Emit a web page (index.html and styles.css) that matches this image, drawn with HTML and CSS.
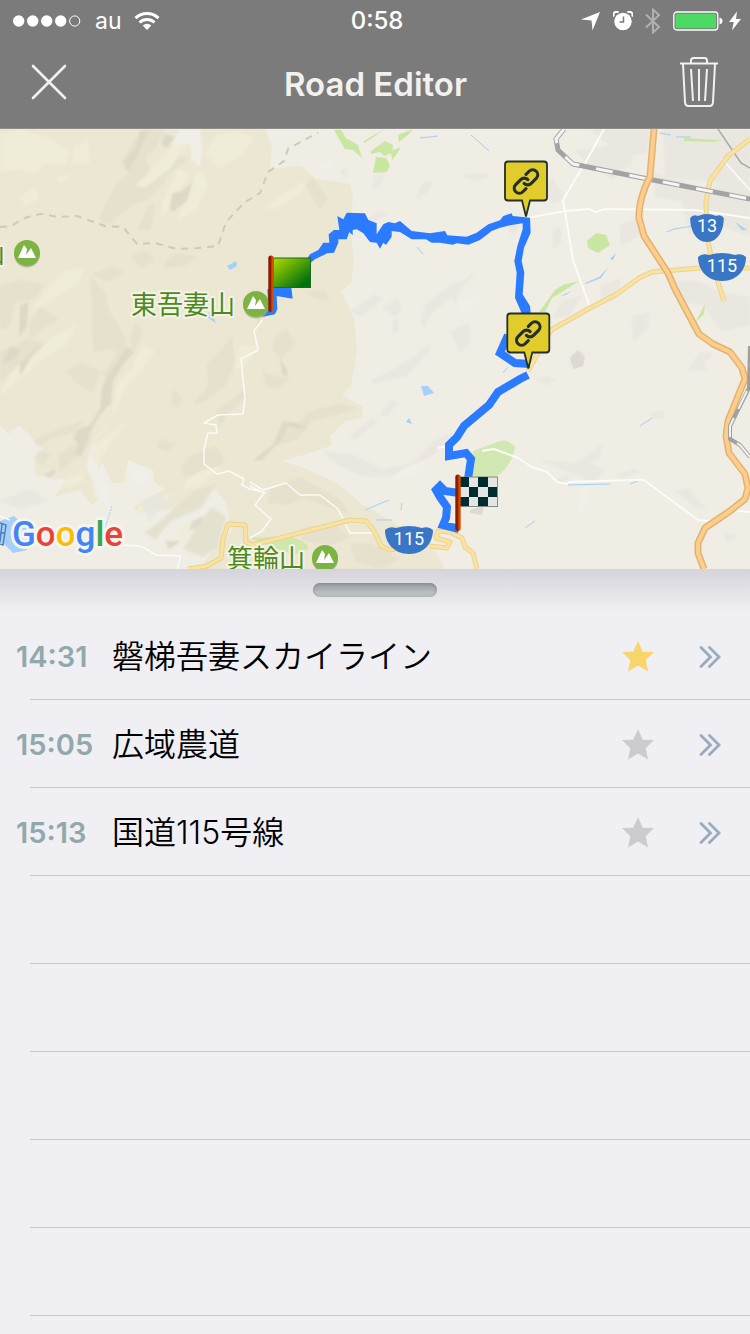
FILE: index.html
```html
<!DOCTYPE html>
<html lang="ja">
<head>
<meta charset="utf-8">
<meta name="viewport" content="width=device-width, initial-scale=1">
<title>Road Editor</title>
<link rel="stylesheet" href="styles.css">
</head>
<body>
<header class="header">
  <div class="status">
    <div class="status-left">
      <svg width="68" height="12" viewBox="0 0 68 12" aria-hidden="true"><g fill="#fff"><circle cx="5.700" cy="6" r="5.700"/><circle cx="19.700" cy="6" r="5.700"/><circle cx="33.700" cy="6" r="5.700"/><circle cx="47.700" cy="6" r="5.700"/></g><circle cx="61.700" cy="6" r="5.100" fill="none" stroke="#fff"/></svg>
      <span class="carrier">au</span>
      <svg width="26" height="20" viewBox="0 0 26 20" aria-hidden="true"><g fill="none" stroke="#fff" stroke-width="3"><path d="M1.500 7.200a16.500 16.500 0 0 1 23 0"/><path d="M5.500 11.500a10.800 10.800 0 0 1 15 0"/></g><path d="M8.700 14.600a6.200 6.200 0 0 1 8.600 0L13 19z" fill="#fff"/></svg>
    </div>
    <time class="clock">0:58</time>
    <div class="status-right">
      <svg width="20" height="20" viewBox="0 0 20 20" aria-hidden="true"><path d="M19 1 11.500 19.500 10.500 9.500 0 8.500z" fill="#fff"/></svg>
      <svg width="20" height="20" viewBox="0 0 20 20" aria-hidden="true"><circle cx="10" cy="10.500" r="8.700" fill="#fff"/><path d="M1 5.500A3 3 0 0 1 5.500 1.600M19 5.500A3 3 0 0 0 14.500 1.600" fill="none" stroke="#fff" stroke-width="2"/><path d="M10.500 5.500v5.500H6.500" fill="none" stroke="#7b7b7b" stroke-width="1.500"/></svg>
      <svg width="16" height="28" viewBox="0 0 16 28" aria-hidden="true"><path d="M1 7.500 14 20 8 25.500V2.500L14 8 1 20.500" fill="none" stroke="#b0b0b0" stroke-width="2"/></svg>
      <svg class="battery" width="50" height="20" viewBox="0 0 50 20" aria-hidden="true"><rect x=".8" y="1" width="44" height="18" rx="3" fill="none" stroke="#fff" stroke-width="1.300"/><rect x="2.500" y="2.700" width="40.600" height="14.600" rx="1.500" fill="#4cd964"/><path d="M46.500 6.500q3 1 3 3.500t-3 3.500z" fill="#fff"/></svg>
      <svg width="12" height="20" viewBox="0 0 12 20" aria-hidden="true"><path d="M8 .5 0 11h4.700L3 19.500 12 8H7z" fill="#fff"/></svg>
    </div>
  </div>
  <div class="nav">
    <button class="icon-button" type="button" aria-label="Close"><svg width="36" height="36" viewBox="0 0 36 36"><path d="m2 2 32 32M34 2 2 34" stroke="#f3f1ee" stroke-width="2.600" stroke-linecap="round"/></svg></button>
    <h1 class="title">Road Editor</h1>
    <button class="icon-button" type="button" aria-label="Delete"><svg width="38" height="52" viewBox="0 0 38 52" fill="none" stroke="#f3f1ee" stroke-width="2"><path d="M0 7.500h38M11 7V4.500Q11 2 13.500 2h11Q27 2 27 4.500V7M3 8l2 38q.2 4 3.500 4h21q3.300 0 3.500-4l2-38M11 13l2 32M19 13v32M27 13l-2 32"/></svg></button>
  </div>
</header>

<main>
<section class="map" aria-label="Map">
<svg class="map-canvas" viewBox="0 128 750 440" preserveAspectRatio="xMidYMid slice">
  <defs>
    <filter id="soften"><feGaussianBlur stdDeviation="1.300"/></filter>
    <linearGradient id="green" x1="0" y1="0" x2="1" y2="1"><stop offset="0" stop-color="#b5dc00"/><stop offset=".85" stop-color="#00710d"/></linearGradient>
    <linearGradient id="pole"><stop offset=".4" stop-color="#8f1a00"/><stop offset=".7" stop-color="#d34f00"/></linearGradient>
    <path id="shield" d="M-24-10Q-20-14-13-12 0-16 13-12 20-14 24-10C24 2 16 14 0 14S-24 2-24-10Z"/>
    <g id="peak"><circle cy="1.500" r="13" fill="#aaa68e" opacity=".7"/><circle r="13" fill="#7cb342"/><path d="M-9 5-3-8 0-4-1 2 4-5 9 5z" fill="#fff"/></g>
    <g id="pin"><path d="M-18-56h36q3 0 3 3v33q0 3-3 3H4L0-1-4-17h-14q-3 0-3-3v-33q0-3 3-3z" fill="#e2cc2c" stroke="#22302b" stroke-width="1.800"/><g transform="translate(-15 -51) scale(1.250)" fill="none" stroke="#22302b" stroke-width="2.500" stroke-linecap="round"><path d="M10.500 13.500a4 4 0 0 0 5.700 0l4-4a4 4 0 0 0-5.700-5.700l-2.500 2.500"/><path d="M13.500 10.500a4 4 0 0 0-5.700 0l-4 4a4 4 0 0 0 5.700 5.700l2.500-2.500"/></g></g>
  </defs>
  <rect y="128" width="750" height="440" fill="#efede4"/>
  <path fill="#ece7d3" d="M0 128H266L272 147 270 168 301 165 316 178 350 183 353 196 350 225 354 260 351 282 341 290 354 318 357 350 351 385 342 394 363 406 361 417 345 420 330 435 332 444 313 451 282 460 307 468 338 483 362 503 390 520 430 540 445 568H200L215 545 232 530 225 500 215 488 198 495 170 508 138 512 134 506 165 488 154 481 153 469 128 459 124 482 112 482 102 460 98 472 104 494 92 504 80 489 54 496 67 479 36 474 34 462 43 448 31 435 19 424 8 433 0 424Z"/>
  <g filter="url(#soften)" opacity=".85">
  <g fill="#e4e0cc">
    <path d="m140 130 25-2-8 18-12 10 6 15 25-20 12 8-30 22-18 10-15 20-20 12-5-8 18-12-4-18 15-12-8-12z"/>
    <path d="m100 213 15-28 20-12 25-5 6 12-20 20-20 5-15 18-10-2zM137 230l8-20 10-10-4 28zM165 260l12-8 22 4-14 9-20 2zM130 255l16-6 10 10-14 8zM92 273l20-7 14 5-20 10zM90 275l15 16 4 18 18 30-2 20-12-10-20 2-1-45zM0 285l20-6 25 4-10 15-20 3-5 25-10 3zM30 320l10-14 20 12-12 6-18 14zM0 350l15-4 10-8 20 4-8 14-20 8-17 18z"/>
    <path d="m80 362 20 8-6 22-18-10-10-12zM122 345l13 0-15 26-14 15-3-14zM173 388l10 8-6 12-6-7zM206 363l14-13 12-15 3 28-8 20-20 17-15 3 16-18zM215 410l12-8 16-13 5 6-20 17-8 14zM160 438l17 5-10 8-10-4zM60 427l25-8-12 13-22 6-13 8-5-7zM74 444l19-12-4 12-16 16-14 11 0-18zM40 450l12 2-10 13-8-8zM135 320l8 10-8 20-6-12zM258 300l8-4 0 20-10 10zM275 335l12-7 8 15-14 15-9-8zM262 370l10 4 18 4-12 10-12-2zM310 410l28-7 20 4-18 6-30 8-12 17-26 8zM180 467l10-12 26-10 10 14-20 18-22-2zM195 490l22-8-16 25-30 13-15 18-12-6 20-15 17-17zM305 290l20 0 5 10-18-4zM303 181l10-4 15 20-8 12zM200 520l12-14 14 10-8 30-15 10-20-8zM270 488l30-12 40 22 10 15-15-4-30-12-18 7-20-2zM300 527l35-3 16 12-20 8-28-4zM350 542l20 0 30 16-20 10-25-8z"/>
  </g>
  <g fill="#f0edd8">
    <path d="m0 133 20-5 30 10 20 12-5 14-20-2-10 10-15-4-20 3zM74 146l14-6 2 22-18 0zM155 165l20-22 15-5-20 30-25 19-10-2zM163 200l15-32 12 4-20 35-10 8zM195 175l8-4 5 13-10 22-22 16zM215 135l20-5 20 6-15 20-20 10-15-12zM20 195l15-8 4 10-14 8zM58 177l8-4 2 5-8 4zM45 290l20-20 18-3-4 14-28 18-20 12zM55 335l22-12-10 20-38 25-5-5zM155 350l-12 18-16 15-8 18-7 16 5-35 15-15 10-22zM40 352l-8 16-24 20-8 6 12-23zM100 440l26-20-15 20-12 20-2 25-8-30zM185 480l15-10 24-6-24 20-16 4zM265 205l25-16 18-10-8 15-28 15zM138 506l14-8 20-5-10 12-26 8zM165 546l16-20 20-10-15 24-24 9zM240 345l20 0-15 20-12 5zM65 478l20-6-3 8-18 8z"/>
  </g>
  <g fill="#dcd6c6">
    <path d="m140 131 10-3-8 15-6 14-8 13-4-10 12-12zM165 133l10 3-8 11-6-4zM171 200l22-20-6 20-12 8-5-2zM127 347l8 4-14 13-8 16-2 22-11 12-8 14-8 18-2 10-7-3 4-10-6-5 4-9 13-5 10-17 2-22 8-13zM10 345l10 4-4 8-14 6zM20 305l8-5-1 25-8 12zM280 358l6 8 2 10-6-3zM283 420l14 2 12 6-20-2-8 13-20 21-8-1 20-15zM38 345l-18 18 0 13 12-22zM172 193l8-3-4 20-6 0zM193 520l10-5-4 10-10 5zM165 540l16 0-12 8zM45 473l10-5 2 7-8 2z"/>
  </g>
  <g fill="#e8e6df">
    <path d="m340 170 9-3-4 10zM375 175l10-4-4 14-9 6zM415 198l8-16 9-3-4 12zM358 225l20-15 10 3-22 12zM460 175l20-3 14 3-18 4zM382 306l16-8 4 12-8 6zM350 310l25-17 8 5-22 18zM420 320l6-18 28-20 14-2-20 18-16 14-8 15zM448 290l28-20-16 20-5 12zM392 320l6-3 0 13-6 4zM372 379l20-10 20-12 15-12 4 4-24 26-35 8zM323 450l30 4 30 14 30-6 20-22 20-8-22 24-40 20-30-1-30-15zM390 400l8 0-10 16-8-3zM350 435l22-18 6 4-24 18zM450 330l20-8 0 20-10 10zM505 220l18-6-10 22zM553 228l8-2 0 17-8 5zM620 225l20-10 0 20-20 10zM680 195l70-20 0 60-30-10-30 8zM600 285l22-8-5 20-15 5zM540 190l12-14 12 20-10 6zM575 150l40-6 20 14-22 20-20-10zM590 128l60 0-3 24-24 5zM663 128l87 0 0 60-45-8-40-4zM655 172l40 12-4 18-36-6zM670 280l30 0 20 12 30 4 0 28-28 6-20-26-22-2zM632 315l18-4-3 18-14 12zM562 300l20-6-12 20-18 4z"/>
    <path d="m538 458 38 5 26-20-2 14-10 4 16 9-14 12-14-8-10-3zM613 475l22-7 7 3-20 5zM687 370l14-20 12 2-10 12 6 5zM650 412l14-3 0 9-12 0zM675 490l14-3 18 22-14-4zM723 532l15 3-10 8zM558 477l12-3-3 6-10 2zM569 356l10-8 6 4-4 14-10 1zM536 380l10-6 10 5-8 4zM0 500l30-12 20 12-30 8zM50 476l10-7-3 12zM140 500l20-8 7 10-18 18z"/>
  </g>
  <g fill="#f1f0eb"><path d="m180 128 20 0 2 20-2 18-8-7-2-16-18 0zM112 418l-15 18-5 20 12 18 5 30-12-6-5-20-6-13 6-20zM128 459l8 10 16 5-12 12zM580 490l8-5-2 20-9 10zM318 165l20-8-10 10zM390 480l12-12 32-12-20 18zM455 305l30-12-20 20z"/></g>
  </g>
  <g fill="#c9e7a2">
    <path d="m334 129 7 0 5 8 12 7 4 13-9-8-8-1zM364 140l20-12-10 8-10 6zM371 150l14-10 8 4-1 8-8 3-4-4-9 2zM376 156l10 1 4 7-3 7-14 1zM391 150l10-4-5 8-4 5zM398 134l15-6-5 6-9 7zM684 137l38 2-9 2-29-1zM587 240l9-8 10 2 4 10-12 8-10-5zM539 311l6-8 10-14 8-5 16-4-14 9-13 8-7 14zM697 318l8-15-1 10-8 8z"/>
    <path d="M473 450 500 440q9-2 15 6-3 17-15 27l-16 10-14-8z" fill="#d2e8b3"/><path d="m250 537 35-2q23 4 23 13l-14 6-22-8z" opacity=".8"/>
  </g>
  <path fill="#ded9d3" d="m570 357 8-8 7 8-2 8-9 3zM470 509l14-4-2 9-12-2z"/>
  <g fill="#a5d0fb"><path d="m227 265 9-5 1 5-7 4zM207 312l4-1 5 11-9-6zM421 385l7 0 6 7-10 3zM406 421l3-4 3 6zM585 282l14-6 9-9-7 10-15 6zM560 295l12-5-6 4-6 1zM610 258l6-6-3 7zM735 221l12 8-5 0zM0 520l14-5 18 18-5 16-14 3-10-10-3 0z"/></g>
  <g fill="none" stroke="#a5cdf7" stroke-width="1"><path d="m420 137 18-2M471 134l18 16M417 246l6 7M659 132l12 2M667 231l7-3 18-3M640 425l12-8M568 484l42-1M630 483l10-4M525 527l10-7M365 509l24-10M376 519l16 0M401 509l1-7M503 372l5-6M676 136l15 0"/><path d="m104 530 8-25" stroke-dasharray="2 1"/></g>
  <path d="M0 522 6 524 3 544 0 543M2 523 0 541M0 532h5" fill="none" stroke="#527fba" stroke-width="1.500"/>
  <path d="M0 226 12 225Q25 214 44 213L57 216 77 215 105 225 123 226 137 243 155 242 177 248 198 247 218 245 226 221 245 201 260 192 268 171 284 160 288 148 304 139 318 132" fill="none" stroke="#cecab9" stroke-width="2" stroke-dasharray="7 6"/>
  <g fill="none" stroke="#fbfbf7" stroke-width="1.800" stroke-linejoin="round">
    <path d="m263 318-9 12 4 19-17 9 4 39-2 16-25 1-14 8 12 2 1 8-9 0-4 16 0 15 13 10 12-3 15 8-2 6 8 4 16 4M250 481l13 8 23-7 14 12 20 0 18 14 12 24 28 0M250 485l14 7-9 12 16 14-9 12-12 7M0 515l10 4M121 544l20 1 15 9 25 1-4 13" stroke-width="1.500"/>
    <path d="m604 128-12 22-29 49 10 60 17 47M526 217l40-7 23-2 7 3 9-3 90 1 55 8M438 447l10-2M482 450l12-2 24 9 14 9 15 5 10 10 10 2 2-2 60-2 15 0 54 40 12 1M737 510l13 1" stroke-width="2"/>
    <path d="m722 158 28 31"/>
  </g>
  <path d="m718 128 23 34 9 5" fill="none" stroke="#aaa" stroke-width="1.500"/>
  <g fill="none" stroke-linejoin="round">
    <path d="m528 370 23-41 39-22 27-14 22-16 13-6 48-4 50 0M750 138l-22 17-18 25-4 20 1 35 6 30 11 35M188 568l19-3 14-8 2-19 5-15 17 1 1 17 6 3 98-25 16 1 8 10 7 15 9 4 40-8M430 545l17 2 3-6-14-4 2-7 12 1 12 6 3 9 8 6 4 16" stroke="#ead291" stroke-width="5"/>
    <path d="m528 370 23-41 39-22 27-14 22-16 13-6 48-4 50 0M750 138l-22 17-18 25-4 20 1 35 6 30 11 35M188 568l19-3 14-8 2-19 5-15 17 1 1 17 6 3 98-25 16 1 8 10 7 15 9 4 40-8M430 545l17 2 3-6-14-4 2-7 12 1 12 6 3 9 8 6 4 16" stroke="#fae3a1" stroke-width="3"/>
    <path d="m564 128-8 10 2 11 15 14 75 15 102 20" stroke="#a3a3a3" stroke-width="5"/><path d="m564 128-8 10 2 11 15 14 75 15 102 20" stroke="#f5f5f5" stroke-width="3" stroke-dasharray="17 17"/>
    <path d="M654 128 650 175Q638 200 639 217L644 235 668 272 675 288 699 333 713 343 730 351 742 367 745 378 738 395 728 420 726 435 729 452 745 473 748 487 745 498 730 510 705 527 698 542 698 552 704 568" stroke="#e4b16f" stroke-width="7"/><path d="M654 128 650 175Q638 200 639 217L644 235 668 272 675 288 699 333 713 343 730 351 742 367 745 378 738 395 728 420 726 435 729 452 745 473 748 487 745 498 730 510 705 527 698 542 698 552 704 568" stroke="#fcce8d" stroke-width="4"/>
    <path d="m750 345-1 42-19 38 0 13 10 6 10 12" stroke="#a0a0a0" stroke-width="4"/><path d="m747 390-17 35 0 13 10 6 10 12" stroke="#f2f2f2" stroke-width="2" stroke-dasharray="20 10"/>
  </g>
  <g fill="#2a7bff">
    <path transform="translate(250 125) scale(.33333)" d="M170 400 180 385 205 372 220 350 238 350 236 325 252 312 268 312 262 270 280 280 290 260 345 262 355 282 380 292 380 325 400 295 415 288 435 292 450 285 485 315 540 322 585 315 592 328 650 332 680 320 715 295 750 283 760 270 785 262 788 270 840 275 842 320 822 365 815 405 823 440 818 505 840 540 842 562 815 562 795 515 800 440 793 405 802 360 818 310 818 292 780 298 750 305 725 315 690 342 655 356 620 352 608 356 570 350 545 350 528 340 485 340 450 318 425 315 425 332 408 357 400 350 390 368 380 350 360 348 340 322 320 310 308 312 308 328 298 318 290 340 265 340 265 350 252 380 232 382 215 390 195 400 180 412ZM75 484 124 484 128 518 80 510 82 550 75 565 35 573 55 550 52 490Z"/>
  </g>
  <path d="M508 334 500 352 515 362 530 363M528 374 520 378 498 391 489 404 464 425 457 436 449 444 449 455 466 452 471 458 468 478M459 492 445 490 440 485 436 489 440 496 447 506 446 517 443 524 459 528" fill="none" stroke="#2a7bff" stroke-width="8"/>
  <use href="#peak" x="27" y="252"/><use href="#peak" x="256" y="303"/><use href="#peak" x="325" y="557"/>
  <g class="place"><text x="-21" y="262">山</text><text x="131" y="313">東吾妻山</text><text x="227" y="567">箕輪山</text></g>
  <g fill="#3976c5"><use href="#shield" transform="translate(707 227) scale(.7 1)"/><use href="#shield" x="722" y="266"/><use href="#shield" x="409" y="539"/></g>
  <g class="route"><text x="707" y="231">13</text><text x="722" y="271">115</text><text x="409" y="544">115</text></g>
  <text class="google" x="12" y="545"><tspan fill="#4285f4">G</tspan><tspan fill="#ea4335">o</tspan><tspan fill="#fbbc05">o</tspan><tspan fill="#4285f4">g</tspan><tspan fill="#34a853">l</tspan><tspan fill="#ea4335">e</tspan></text>
  <rect x="273" y="257" width="37.500" height="29.500" fill="url(#green)" stroke="#176b22"/>
  <rect x="268.300" y="254.500" width="5.400" height="56.500" rx="2.700" fill="url(#pole)"/>
  <rect x="460" y="476" width="37.500" height="29.500" fill="#e5e5e4" stroke="#7f8d8c"/>
  <path fill="#002b31" d="M460 476h9v10h-9zM478 476h10v10h-10zM469 486h9v10h-9zM488 486h9v10h-9zM460 496h9v9h-9zM478 496h10v9h-10z"/>
  <rect x="455.300" y="473.500" width="5.400" height="56.500" rx="2.700" fill="url(#pole)"/>
  <use href="#pin" x="526" y="216.500"/><use href="#pin" x="528.300" y="368.500"/>
</svg>
</section>

<section class="panel">
  <div class="grip"><button class="handle" type="button" aria-label="Resize list"></button></div>
  <svg class="symbols" aria-hidden="true"><symbol id="star" viewBox="0 0 32 32"><path d="m16 1 4.800 10.700L32 12l-8.300 8.200L26 31.500l-10-6-10 6 2.300-11.300L0 12l11.200-.3z" fill="currentColor"/></symbol><symbol id="more" viewBox="0 0 24 24"><path d="m3 3.500 9.500 9.500L3 22.500M11.500 3.500 21 13l-9.500 9.500" fill="none" stroke="currentColor" stroke-width="2.800" stroke-linecap="round"/></symbol></svg>
  <ul class="list">
    <li class="row"><time class="time">14:31</time><span class="name">磐梯吾妻スカイライン</span><button class="star star-on" type="button" aria-label="Favorite" aria-pressed="true"><svg width="32" height="32"><use href="#star"/></svg></button><button class="more" type="button" aria-label="Details"><svg width="24" height="24"><use href="#more"/></svg></button></li>
    <li class="row"><time class="time">15:05</time><span class="name">広域農道</span><button class="star" type="button" aria-label="Favorite" aria-pressed="false"><svg width="32" height="32"><use href="#star"/></svg></button><button class="more" type="button" aria-label="Details"><svg width="24" height="24"><use href="#more"/></svg></button></li>
    <li class="row"><time class="time">15:13</time><span class="name">国道115号線</span><button class="star" type="button" aria-label="Favorite" aria-pressed="false"><svg width="32" height="32"><use href="#star"/></svg></button><button class="more" type="button" aria-label="Details"><svg width="24" height="24"><use href="#more"/></svg></button></li>
    <li class="row" aria-hidden="true"></li>
    <li class="row" aria-hidden="true"></li>
    <li class="row" aria-hidden="true"></li>
    <li class="row" aria-hidden="true"></li>
    <li class="row" aria-hidden="true"></li>
  </ul>
</section>
</main>
</body>
</html>
```
FILE: styles.css
```css
* { box-sizing: border-box; }

body {
  margin: 0;
  min-height: 100vh;
  background: #efeff4;
  color: #000;
  font-family: Inter, "Noto Sans CJK JP", sans-serif;
}

button {
  display: flex;
  margin: 0;
  padding: 0;
  border: 0;
  background: none;
  color: inherit;
  cursor: pointer;
}

.header {
  background: #7b7b7b;
  border-bottom: 1px solid #8f8e8b;
  color: #fff;
}

.status {
  display: grid;
  grid-template-columns: 1fr auto 1fr;
  align-items: center;
  height: 41px;
  padding: 0 9px 0 13px;
}

.status-left,
.status-right {
  display: flex;
  align-items: center;
  gap: 12px;
}

.status-right { justify-content: flex-end; }
.battery { margin-right: -6px; }
.carrier { padding-left: 2px; font-size: 23px; }
.clock { font-size: 24px; font-weight: 500; }

.nav {
  display: flex;
  align-items: center;
  justify-content: space-between;
  height: 87px;
  padding: 0 32px 5px 31px;
}

.title {
  margin: 0;
  padding: 4px 0 0 4px;
  color: #f3f1ee;
  font-size: 33px;
  font-weight: 600;
}

.map-canvas { display: block; width: 100%; height: auto; }

.place {
  fill: #4b8a1c;
  stroke: #f5f3e6;
  stroke-width: 4px;
  stroke-linejoin: round;
  paint-order: stroke;
  font: 26px "Noto Sans CJK JP", sans-serif;
}

.route {
  fill: #fff;
  font: 18px Roboto, sans-serif;
  text-anchor: middle;
}

.google {
  stroke: #f5f4ef;
  stroke-width: 6px;
  stroke-linejoin: round;
  paint-order: stroke;
  font: 500 35px Roboto, sans-serif;
}

.grip {
  display: flex;
  justify-content: center;
  height: 43px;
  padding-top: 14px;
  background: linear-gradient(#d5d4da, #efeff4);
}

.handle {
  width: 124px;
  height: 14px;
  border-radius: 7px;
  background: linear-gradient(#999b9e, #b8bec1 70%);
  box-shadow: inset 0 1px 3px #86898c;
}

.symbols { display: none; }
.list { margin: 0; padding: 0; list-style: none; }

.row {
  display: flex;
  align-items: center;
  height: 88px;
  padding: 0 28px 0 16px;
  background: linear-gradient(#c8c7cc, #c8c7cc) no-repeat 30px 100% / 100% 1px;
}

.time {
  flex: 0 0 96px;
  color: #92a9ab;
  font-size: 29px;
  font-weight: 600;
}

.name { flex: 1; padding-bottom: 4px; font-size: 32px; font-weight: 350; }
.star { color: #ccc; }
.star-on { color: #f8d66b; }
.more { margin-left: 44px; color: #98abc0; }
```
